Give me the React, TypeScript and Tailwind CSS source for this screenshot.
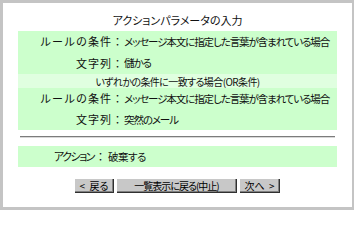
import React from "react";

const font = { fontFamily: '"Noto Sans CJK JP", "Noto Sans", sans-serif', fontFeatureSettings: '"palt"' } as React.CSSProperties;
const plain = { fontFeatureSettings: "normal" } as React.CSSProperties;

function Row({ label, value, h }: { label: string; value: string; h: string }) {
  return (
    <>
      <div style={plain} className={`${h} flex items-center justify-end text-[11px] tracking-[1px] whitespace-nowrap`}>{label}</div>
      <div className={`${h} flex items-center text-[10.5px] tracking-[-1.1px] whitespace-nowrap`}>{value}</div>
    </>
  );
}

function Btn({ w, children, extra }: { w: string; children: React.ReactNode; extra?: string }) {
  return (
    <div
      className={`${w} ${extra ?? ""} h-[14px] bg-[#c8c8c8] border-r border-b border-[#303030] shadow-[inset_-1px_-1px_0_#808080] flex items-center justify-center text-[10px] leading-none text-black whitespace-pre`}
    >
      {children}
    </div>
  );
}

export default function App() {
  return (
    <div
      style={font}
      className="w-[354px] h-[210px] bg-white border-l-[3px] border-t-[3px] border-r-2 border-b-[3px] border-[#c4c4c4] text-[#111] flex flex-col px-[15px]"
    >
      <div className="pt-[9px] h-[28px] text-[11px] leading-[16px] text-center">アクションパラメータの入力</div>
      <div className="bg-[#ccffcc] grid grid-cols-[106px_1fr]">
        <Row h="h-[21px]" label="ルールの条件：" value="メッセージ本文に指定した言葉が含まれている場合" />
        <Row h="h-[22px]" label="文字列：" value="儲かる" />
        <div className="col-span-2 h-[14px] bg-[#e0ffe0] flex items-center justify-center text-[10px] tracking-[-0.6px] whitespace-nowrap">
          いずれかの条件に一致する場合(OR条件)
        </div>
        <Row h="h-[21px]" label="ルールの条件：" value="メッセージ本文に指定した言葉が含まれている場合" />
        <Row h="h-[21px]" label="文字列：" value="突然のメール" />
      </div>
      <div className="h-[14px] flex items-center px-[2px]">
        <div className="w-full border-t border-[#7c7c7c] border-b border-b-[#d8d8d8]" />
      </div>
      <div className="mt-[2px] bg-[#ccffcc] grid grid-cols-[88px_1fr]">
        <div className="h-[21px] flex items-center justify-end text-[11px] whitespace-nowrap">
          <span className="tracking-[-1.5px] mr-[1px]">アクション</span>
          <span style={plain}>：</span>
        </div>
        <div className="h-[21px] flex items-center pl-[2px] text-[10.5px] tracking-[-0.5px] whitespace-nowrap">破棄する</div>
      </div>
      <div className="mt-[12px] flex justify-center gap-[3px]">
        <Btn w="w-[39px]">{"<  戻る"}</Btn>
        <Btn w="w-[120px]" extra="tracking-[-1px]">一覧表示に戻る(中止)</Btn>
        <Btn w="w-[40px]">{"次へ  >"}</Btn>
      </div>
    </div>
  );
}
